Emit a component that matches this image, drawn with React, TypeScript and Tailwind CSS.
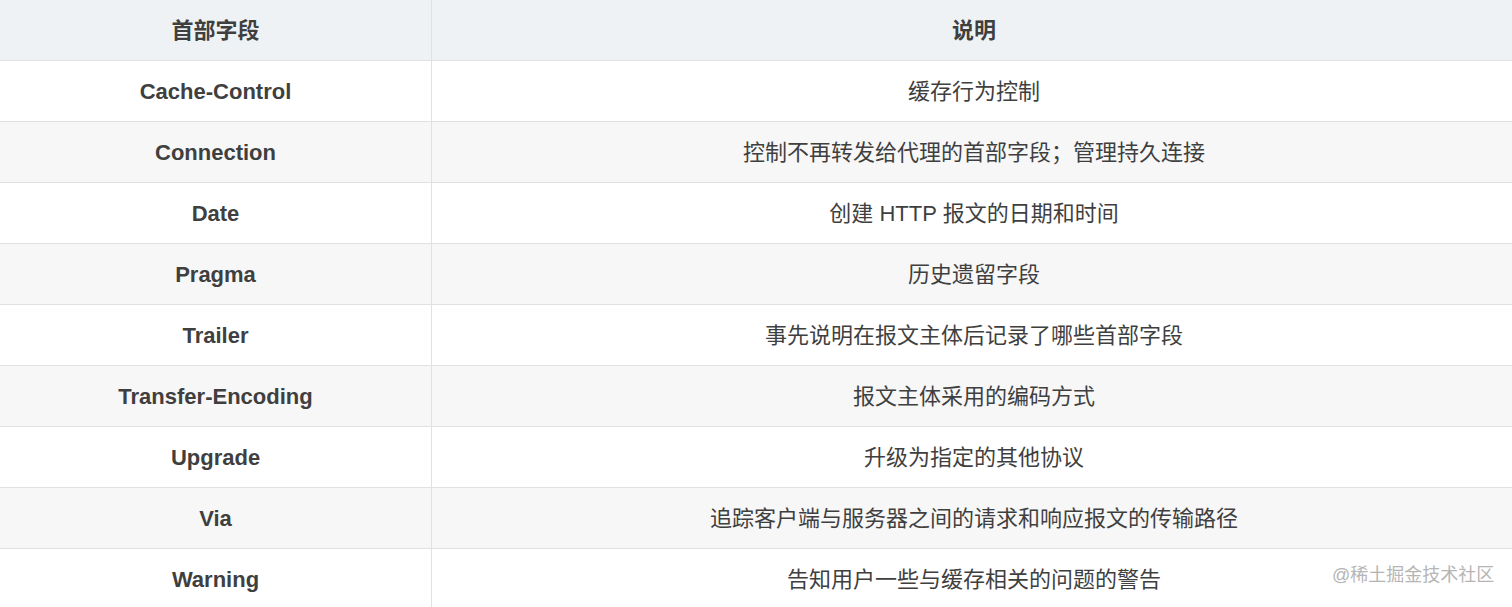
const rows: [string, string][] = [
  ["Cache-Control", "缓存行为控制"],
  ["Connection", "控制不再转发给代理的首部字段；管理持久连接"],
  ["Date", "创建 HTTP 报文的日期和时间"],
  ["Pragma", "历史遗留字段"],
  ["Trailer", "事先说明在报文主体后记录了哪些首部字段"],
  ["Transfer-Encoding", "报文主体采用的编码方式"],
  ["Upgrade", "升级为指定的其他协议"],
  ["Via", "追踪客户端与服务器之间的请求和响应报文的传输路径"],
  ["Warning", "告知用户一些与缓存相关的问题的警告"],
];

export default function App() {
  return (
    <div
      className="relative w-[1512px] h-[607px] overflow-hidden bg-white text-[22px] text-[#3f3f3f]"
      style={{ fontFamily: '"Liberation Sans", "Noto Sans CJK SC", sans-serif' }}
    >
      {/* header */}
      <div className="flex h-[61px] border-b border-[#dfe2e5] bg-[#eff2f4] font-bold">
        <div className="w-[432px] shrink-0 flex items-center justify-center border-r border-[#dfe2e5]">
          首部字段
        </div>
        <div className="flex-1 flex items-center justify-center pl-[4px]">说明</div>
      </div>

      {rows.map(([name, desc], i) => (
        <div
          key={name}
          className={`flex h-[61px] border-b border-[#dfe2e5] ${i % 2 === 1 ? "bg-[#f7f7f7]" : "bg-white"}`}
        >
          <div className="w-[432px] shrink-0 flex items-center justify-center border-r border-[#dfe2e5] font-bold">
            {name}
          </div>
          <div className="flex-1 flex items-center justify-center pl-[4px]">{desc}</div>
        </div>
      ))}

      {/* watermark */}
      <div className="absolute left-[1332px] top-[566px] text-[18px] text-[#b5b5b5] leading-none">
        @稀土掘金技术社区
      </div>
    </div>
  );
}
